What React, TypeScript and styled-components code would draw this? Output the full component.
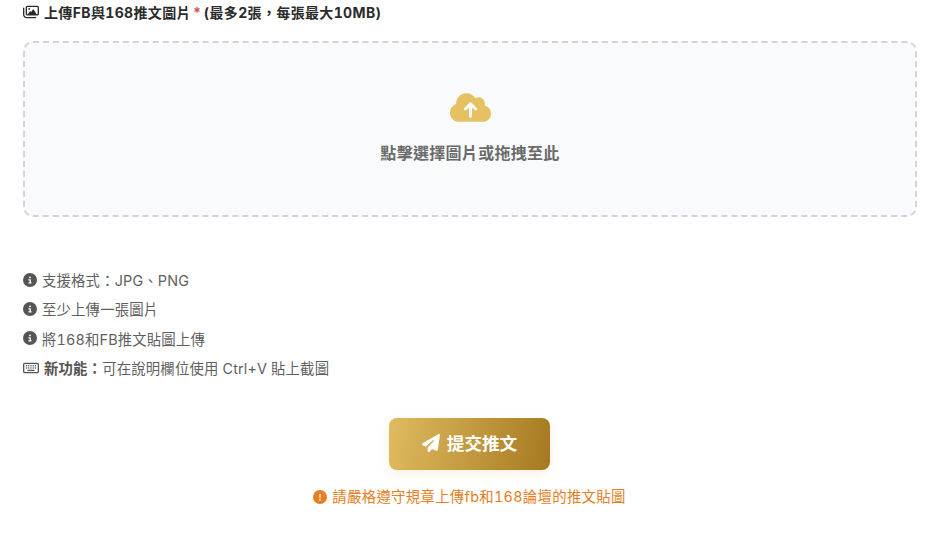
import React from 'react';
import styled, { createGlobalStyle } from 'styled-components';
import {
  FaCloudArrowUp,
  FaCircleExclamation,
  FaCircleInfo,
  FaPaperPlane,
  FaRegImages,
  FaRegKeyboard,
} from 'react-icons/fa6';

const GlobalStyle = createGlobalStyle`
  html, body {
    margin: 0;
    padding: 0;
    background: #ffffff;
    font-family: Inter, "Noto Sans CJK TC", sans-serif;
    font-variant-numeric: tabular-nums;
  }
`;

const Page = styled.div`
  width: 930px;
  height: 535px;
  box-sizing: border-box;
  padding: 3px 13px 0 23px;
  overflow: hidden;
`;

const Label = styled.div`
  display: flex;
  align-items: center;
  gap: 5px;
  height: 18px;
  font-size: 14px;
  font-weight: 700;
  letter-spacing: 0.35px;
  word-spacing: -2.4px;
  color: #2b2b2b;
  white-space: pre;
  svg {
    font-size: 16px;
    color: #2b2b2b;
  }
`;

const Required = styled.span`
  color: #d9534f;
`;

const DropZone = styled.div`
  margin-top: 20px;
  height: 176px;
  box-sizing: border-box;
  border: 2px dashed #d0d4df;
  border-radius: 10px;
  background: #f9fafc;
  display: flex;
  flex-direction: column;
  align-items: center;
  padding-top: 48px;
`;

const CloudIcon = styled(FaCloudArrowUp)`
  font-size: 41px;
  height: 33px;
  color: #e6c162;
`;

const DropText = styled.div`
  margin-top: 18px;
  font-size: 16px;
  line-height: 22px;
  font-weight: 700;
  letter-spacing: 0.3px;
  color: #6b6b6b;
`;

const Notes = styled.ul`
  list-style: none;
  margin: 48px 0 0;
  padding: 0;
  display: flex;
  flex-direction: column;
`;

const Note = styled.li`
  display: flex;
  align-items: center;
  gap: 5px;
  height: 29.3px;
  font-size: 14.4px;
  letter-spacing: 0.15px;
  color: #5f5f5f;
  white-space: pre;
  svg {
    font-size: 14px;
    color: #555555;
    flex: none;
  }
  strong {
    font-weight: 700;
    color: #555555;
  }
`;

const KeyboardIcon = styled(FaRegKeyboard)`
  && {
    font-size: 16px;
  }
`;

const Actions = styled.div`
  margin-top: 36px;
  padding-right: 1px;
  display: flex;
  flex-direction: column;
  align-items: center;
`;

const SubmitButton = styled.button`
  width: 161px;
  height: 52px;
  border: none;
  border-radius: 8px;
  background: linear-gradient(100deg, #e0bb60 0%, #a67920 100%);
  box-shadow: 0 4px 12px rgba(212, 175, 85, 0.18);
  color: #ffffff;
  font-family: inherit;
  font-size: 17.6px;
  font-weight: 700;
  display: flex;
  align-items: center;
  justify-content: center;
  gap: 7px;
  padding: 0 0 3px;
  svg {
    font-size: 18px;
  }
`;

const Warning = styled.div`
  margin-top: 17px;
  display: flex;
  align-items: center;
  gap: 5px;
  font-size: 14.4px;
  line-height: 20px;
  letter-spacing: 0.3px;
  color: #e67e22;
  svg {
    font-size: 14px;
  }
`;

export default function App() {
  return (
    <Page>
      <GlobalStyle />
      <Label>
        <FaRegImages />
        <span>
          上傳FB與168推文圖片 <Required>*</Required> (最多2張，每張最大10MB)
        </span>
      </Label>

      <DropZone>
        <CloudIcon />
        <DropText>點擊選擇圖片或拖拽至此</DropText>
      </DropZone>

      <Notes>
        <Note>
          <FaCircleInfo />
          支援格式：JPG、PNG
        </Note>
        <Note>
          <FaCircleInfo />
          至少上傳一張圖片
        </Note>
        <Note>
          <FaCircleInfo />
          將168和FB推文貼圖上傳
        </Note>
        <Note>
          <KeyboardIcon />
          <span>
            <strong>新功能：</strong>可在說明欄位使用 Ctrl+V 貼上截圖
          </span>
        </Note>
      </Notes>

      <Actions>
        <SubmitButton>
          <FaPaperPlane />
          提交推文
        </SubmitButton>
        <Warning>
          <FaCircleExclamation />
          請嚴格遵守規章上傳fb和168論壇的推文貼圖
        </Warning>
      </Actions>
    </Page>
  );
}
